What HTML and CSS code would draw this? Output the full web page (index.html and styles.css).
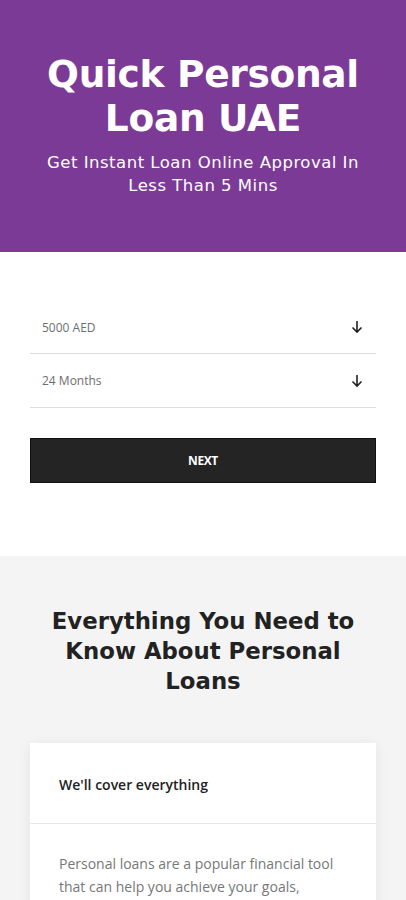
FILE: index.html
```html
<!DOCTYPE html>
<html>
<head>
<meta charset="utf-8">
<link rel="stylesheet" href="styles.css">
</head>
<body>
<header class="hero">
  <h1 class="hero-title">Quick Personal Loan UAE</h1>
  <p class="hero-sub">Get Instant Loan Online Approval In Less Than 5 Mins</p>
</header>
<section class="form">
  <div class="field"><span>5000 AED</span><svg class="arrow" viewBox="0 0 12 14" width="12" height="14"><path d="M6 1v11M1.5 7.5L6 12l4.5-4.5" fill="none" stroke="#222" stroke-width="1.6"/></svg></div>
  <div class="field"><span>24 Months</span><svg class="arrow" viewBox="0 0 12 14" width="12" height="14"><path d="M6 1v11M1.5 7.5L6 12l4.5-4.5" fill="none" stroke="#222" stroke-width="1.6"/></svg></div>
  <button class="next">NEXT</button>
</section>
<section class="info">
  <h2 class="info-title">Everything You Need to Know About Personal Loans</h2>
  <div class="card">
    <div class="card-head">We'll cover everything</div>
    <div class="card-body">Personal loans are a popular financial tool that can help you achieve your goals, whether it's consolidating debt, funding a home renovation, or covering unexpected expenses.</div>
  </div>
</section>
</body>
</html>
```
FILE: styles.css
```css
* { box-sizing: border-box; }
html, body { margin: 0; padding: 0; }
body { width: 406px; height: 900px; overflow: hidden; font-family: "Open Sans", sans-serif; background: #fff; }
.hero { background: #7c3a97; height: 252px; padding-top: 52px; text-align: center; color: #fff; }
.hero-title { margin: 0 auto; width: 340px; font-family: "DejaVu Sans", sans-serif; font-weight: 700; font-size: 37.5px; line-height: 44px; letter-spacing: -0.3px; }
.hero-sub { margin: 11px auto 0; width: 330px; font-family: "DejaVu Sans", sans-serif; font-size: 16.5px; line-height: 23px; letter-spacing: 0.5px; }
.form { padding: 49px 30px 0; height: 304px; }
.field { display: flex; align-items: center; justify-content: space-between; height: 54px; border-bottom: 1.5px solid #ddd; padding: 0 13px 0 12px; font-size: 12px; color: #6e6e6e; }
.field:first-child { height: 53px; }
.next { display: block; width: 100%; height: 45px; margin-top: 30px; background: #242424; color: #fff; border: 1px solid #111; font-family: "Open Sans", sans-serif; font-weight: 700; font-size: 12px; letter-spacing: -0.4px; }
.info { background: #f4f4f4; height: 344px; padding-top: 50px; }
.info-title { margin: 0 auto; width: 320px; text-align: center; font-family: "DejaVu Sans", sans-serif; font-weight: 700; font-size: 22.8px; line-height: 30px; color: #222; }
.card { margin: 47px 30px 0; background: #fff; box-shadow: 0 2px 12px rgba(0,0,0,0.07); }
.card-head { height: 81px; padding: 32px 29px 0; font-size: 14px; font-weight: 600; color: #222; border-bottom: 1.5px solid #e6e6e6; }
.card-body { padding: 29px 29px 0; font-size: 14px; line-height: 22.5px; color: #777; }
```
